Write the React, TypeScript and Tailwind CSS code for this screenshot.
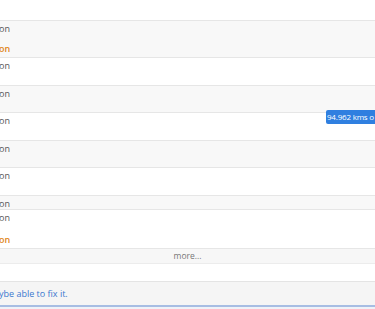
import React from "react";

const rows = [
  { bg: "bg-[#f8f8f8]", h: "h-[37px]", sub: true },
  { bg: "bg-white", h: "h-[28px]", sub: false },
  { bg: "bg-[#f8f8f8]", h: "h-[27px]", sub: false },
  { bg: "bg-white", h: "h-[28px]", sub: false, tip: true },
  { bg: "bg-[#f8f8f8]", h: "h-[27px]", sub: false },
  { bg: "bg-white", h: "h-[28px]", sub: false },
  { bg: "bg-[#f8f8f8]", h: "h-[14px]", sub: false },
  { bg: "bg-white", h: "h-[39px]", sub: true },
];

export default function App() {
  return (
    <div
      className="w-[375px] h-[309px] overflow-hidden bg-white text-[#555]"
      style={{ fontFamily: '"Open Sans", "Liberation Sans", sans-serif' }}
    >
      <div className="h-[21px] border-b border-[#e6e6e6]" />
      {rows.map((r, i) => (
        <div
          key={i}
          className={`relative ${r.h} ${r.bg} border-b border-[#e6e6e6] flex flex-col justify-between`}
        >
          <span className="text-[9px] leading-[11px] mt-[2px] -ml-[1px]">on</span>
          {r.sub && (
            <span className="text-[9px] leading-[11px] mb-[3px] -ml-[1px] font-semibold text-[#e0861a]">on</span>
          )}
          {r.tip && (
            <div className="absolute right-0 top-[-3px] w-[49px] h-[14px] bg-[#2f7fe0] rounded-l-[2px] overflow-hidden whitespace-nowrap pl-[1px] text-[8px] tracking-[-0.2px] leading-[14px] text-white">
              94.962 kms o
            </div>
          )}
        </div>
      ))}
      <div className="h-[15px] bg-[#f7f7f7] border-b border-[#ececec] flex items-center justify-center text-[8.5px] text-[#777]">
        more...
      </div>
      <div className="h-[18px] bg-white border-b border-[#e4e4e4]" />
      <div className="h-[25px] bg-[#f5f5f5] border-b-2 border-[#a7bde3] flex items-center text-[9px] text-[#3b78cf]">
        <span className="-ml-[1px]">ybe able to fix it.</span>
      </div>
      <div className="h-[10px] bg-[#eef2f8]" />
    </div>
  );
}
